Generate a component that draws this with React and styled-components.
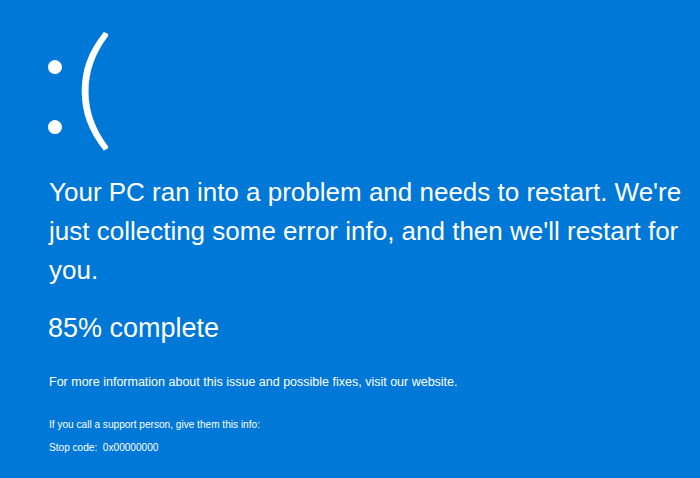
import React from 'react';
import styled, { createGlobalStyle } from 'styled-components';

const GlobalStyle = createGlobalStyle`
  html, body {
    margin: 0;
    padding: 0;
    background: #0078d7;
  }
  body {
    font-family: "Liberation Sans", Arial, sans-serif;
    color: #ffffff;
  }
`;

const Screen = styled.main`
  width: 700px;
  height: 478px;
  box-sizing: border-box;
  padding: 0 0 0 37px;
  background: #0078d7;
  color: #fff;
  overflow: hidden;
`;

const Face = styled.div`
  font-family: Lato, "Liberation Sans", sans-serif;
  line-height: 1;
  height: 160px;
  display: flex;
  align-items: baseline;
  white-space: nowrap;
`;

const Glyph = styled.span`
  display: inline-block;
  font-size: ${(p) => p.size}px;
  font-weight: ${(p) => p.weight || 300};
  transform: scaleX(${(p) => p.stretch || 1});
  transform-origin: left center;
`;

const Body = styled.section`
  padding-left: 12px;
`;

const Message = styled.p`
  margin: 13px 0 0;
  font-size: 26px;
  line-height: 39px;
  width: 650px;
`;

const Progress = styled.p`
  margin: 19px 0 0 -1px;
  font-size: 27px;
  line-height: 39px;
`;

const Info = styled.p`
  margin: 25px 0 0;
  font-size: 12.5px;
  line-height: 18px;
`;

const Small = styled.p`
  margin: ${(p) => p.gap}px 0 0;
  font-size: 10.1px;
  line-height: 14px;
`;

export default function App() {
  return (
    <>
      <GlobalStyle />
      <Screen>
        <Face>
          <Glyph size={150}>:</Glyph>
          <Glyph size={133} stretch={1.2}>(</Glyph>
        </Face>
        <Body>
          <Message>
            Your PC ran into a problem and needs to restart. We're just collecting
            some error info, and then we'll restart for you.
          </Message>
          <Progress>85% complete</Progress>
          <Info>
            For more information about this issue and possible fixes, visit our website.
          </Info>
          <Small gap={27}>If you call a support person, give them this info:</Small>
          <Small gap={9}>Stop code:&nbsp;&nbsp;0x00000000</Small>
        </Body>
      </Screen>
    </>
  );
}
